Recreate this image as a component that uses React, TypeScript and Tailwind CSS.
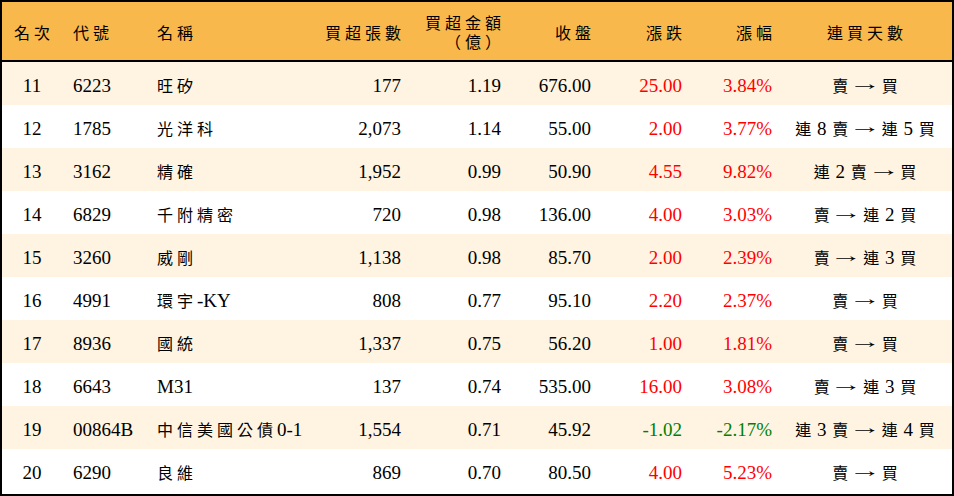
import React from 'react';

type Row = {
  rank: string;
  code: string;
  name: string;
  lots: string;
  amount: string;
  close: string;
  change: string;
  pct: string;
  streak: string;
};

const rows: Row[] = [
  { rank: '11', code: '6223', name: '旺矽', lots: '177', amount: '1.19', close: '676.00', change: '25.00', pct: '3.84%', streak: '賣 → 買' },
  { rank: '12', code: '1785', name: '光洋科', lots: '2,073', amount: '1.14', close: '55.00', change: '2.00', pct: '3.77%', streak: '連 8 賣 → 連 5 買' },
  { rank: '13', code: '3162', name: '精確', lots: '1,952', amount: '0.99', close: '50.90', change: '4.55', pct: '9.82%', streak: '連 2 賣 → 買' },
  { rank: '14', code: '6829', name: '千附精密', lots: '720', amount: '0.98', close: '136.00', change: '4.00', pct: '3.03%', streak: '賣 → 連 2 買' },
  { rank: '15', code: '3260', name: '威剛', lots: '1,138', amount: '0.98', close: '85.70', change: '2.00', pct: '2.39%', streak: '賣 → 連 3 買' },
  { rank: '16', code: '4991', name: '環宇-KY', lots: '808', amount: '0.77', close: '95.10', change: '2.20', pct: '2.37%', streak: '賣 → 買' },
  { rank: '17', code: '8936', name: '國統', lots: '1,337', amount: '0.75', close: '56.20', change: '1.00', pct: '1.81%', streak: '賣 → 買' },
  { rank: '18', code: '6643', name: 'M31', lots: '137', amount: '0.74', close: '535.00', change: '16.00', pct: '3.08%', streak: '賣 → 連 3 買' },
  { rank: '19', code: '00864B', name: '中信美國公債0-1', lots: '1,554', amount: '0.71', close: '45.92', change: '-1.02', pct: '-2.17%', streak: '連 3 賣 → 連 4 買' },
  { rank: '20', code: '6290', name: '良維', lots: '869', amount: '0.70', close: '80.50', change: '4.00', pct: '5.23%', streak: '賣 → 買' },
];

type Kind = 'cjk' | 'arrow' | 'latin';
const kindOf = (c: string): Kind =>
  c === '→' ? 'arrow' : /[\u3000-\u9fff\uff00-\uffef]/.test(c) ? 'cjk' : 'latin';

// splits text so CJK runs get the CJK font and size; tracked = wide letter spacing
const T: React.FC<{ s: string; tracked?: boolean }> = ({ s, tracked = true }) => {
  const runs: { kind: Kind; text: string }[] = [];
  for (const ch of s) {
    const kind = kindOf(ch);
    const last = runs[runs.length - 1];
    if (last && last.kind === kind) last.text += ch;
    else runs.push({ kind, text: ch });
  }
  return (
    <>
      {runs.map((r, i) => {
        if (r.kind === 'cjk')
          return (
            <span
              key={i}
              className={`font-['Noto_Sans_CJK_TC',sans-serif] text-[16px] ${tracked ? 'tracking-[4px]' : ''}`}
            >
              {r.text}
            </span>
          );
        if (r.kind === 'arrow')
          return (
            <span key={i} className="inline-block w-[22px] text-center scale-x-[1.7] -translate-y-[2px]">
              {r.text}
            </span>
          );
        return <span key={i}>{r.text}</span>;
      })}
    </>
  );
};

const cols = 'grid grid-cols-[60px_84px_175px_80px_100px_90px_91px_90px_180px] items-center';

const App: React.FC = () => {
  return (
    <div className="w-[954px] h-[496px] bg-white border-2 border-black font-['Liberation_Serif','Noto_Sans_CJK_TC',serif] text-[19px] text-black leading-none overflow-hidden">
      <div className={`${cols} h-[60px] bg-[#f9b84b] border-b-2 border-black pt-[2px]`}>
        <div className="text-center pl-[4px]"><T s="名次" /></div>
        <div className="pl-[11px]"><T s="代號" /></div>
        <div className="pl-[11px]"><T s="名稱" /></div>
        <div className="text-right -mr-[4px]"><T s="買超張數" /></div>
        <div className="text-right -mr-[4px] leading-[19px]">
          <div><T s="買超金額" /></div>
          <div><T s="（億）" /></div>
        </div>
        <div className="text-right -mr-[4px]"><T s="收盤" /></div>
        <div className="text-right -mr-[4px]"><T s="漲跌" /></div>
        <div className="text-right -mr-[4px]"><T s="漲幅" /></div>
        <div className="text-center pl-[10px]"><T s="連買天數" /></div>
      </div>

      {rows.map((r, i) => {
        const neg = r.change.startsWith('-');
        const color = neg ? 'text-[#008000]' : 'text-[#ff0000]';
        return (
          <div key={r.rank} className={`${cols} h-[43px] pt-[3px] ${i % 2 === 0 ? 'bg-[#fff4e1]' : 'bg-white'}`}>
            <div className="text-center">{r.rank}</div>
            <div className="pl-[11px]">{r.code}</div>
            <div className="pl-[11px] whitespace-nowrap"><T s={r.name} /></div>
            <div className="text-right">{r.lots}</div>
            <div className="text-right">{r.amount}</div>
            <div className="text-right">{r.close}</div>
            <div className={`text-right ${color}`}>{r.change}</div>
            <div className={`text-right ${color}`}>{r.pct}</div>
            <div className="text-center pl-[6px] whitespace-nowrap [word-spacing:1px]">
              <T s={r.streak} tracked={false} />
            </div>
          </div>
        );
      })}
    </div>
  );
};

export default App;
